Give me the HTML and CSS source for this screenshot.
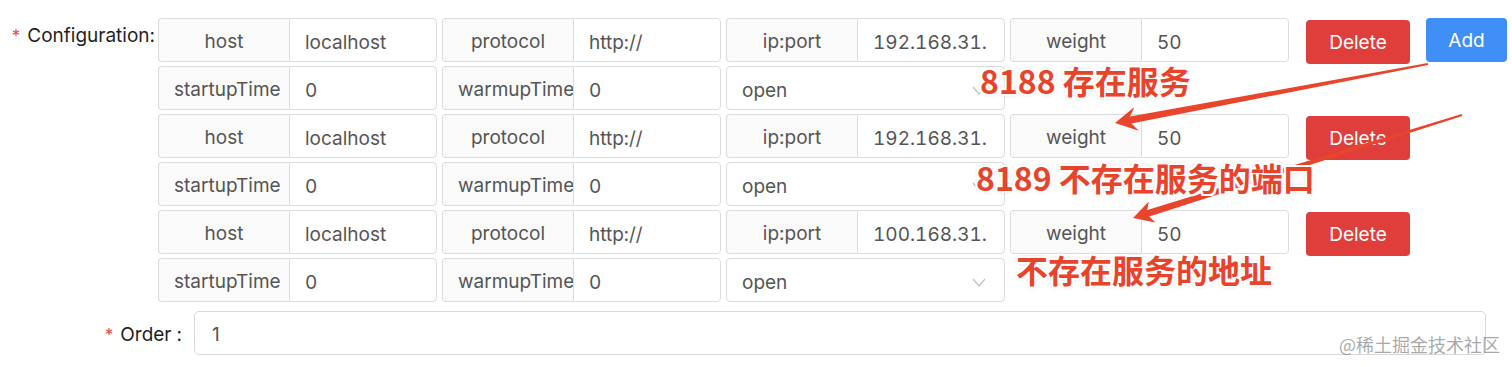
FILE: index.html
```html
<!DOCTYPE html>
<html lang="en">
<head>
  <meta charset="UTF-8">
  <meta name="viewport" content="width=device-width, initial-scale=1.0">
  <title>Configuration</title>
  <link rel="stylesheet" href="styles.css">
</head>
<body>
  <form class="form">
    <div class="form-item">
      <label class="item-label config-label"><span class="req">*</span>Configuration:</label>
      <div class="item-control">

        <div class="line">
          <div class="group"><span class="addon">host</span><input class="field" value="localhost" readonly></div>
          <div class="group"><span class="addon">protocol</span><input class="field" value="http://" readonly></div>
          <div class="group"><span class="addon">ip:port</span><input class="field" value="192.168.31." readonly></div>
          <div class="group"><span class="addon">weight</span><input class="field" value="50" readonly></div>
          <button type="button" class="btn btn-delete">Delete</button>
          <button type="button" class="btn btn-add">Add</button>
        </div>
        <div class="line">
          <div class="group"><span class="addon">startupTime</span><input class="field" value="0" readonly></div>
          <div class="group"><span class="addon">warmupTime</span><input class="field" value="0" readonly></div>
          <div class="select"><span>open</span><svg class="chevron" width="14" height="9" viewBox="0 0 14 9"><path d="M1 1 L7 8 L13 1" fill="none" stroke="#c2c2c2" stroke-width="1.2"/></svg></div>
        </div>

        <div class="line">
          <div class="group"><span class="addon">host</span><input class="field" value="localhost" readonly></div>
          <div class="group"><span class="addon">protocol</span><input class="field" value="http://" readonly></div>
          <div class="group"><span class="addon">ip:port</span><input class="field" value="192.168.31." readonly></div>
          <div class="group"><span class="addon">weight</span><input class="field" value="50" readonly></div>
          <button type="button" class="btn btn-delete">Delete</button>
        </div>
        <div class="line">
          <div class="group"><span class="addon">startupTime</span><input class="field" value="0" readonly></div>
          <div class="group"><span class="addon">warmupTime</span><input class="field" value="0" readonly></div>
          <div class="select"><span>open</span><svg class="chevron" width="14" height="9" viewBox="0 0 14 9"><path d="M1 1 L7 8 L13 1" fill="none" stroke="#c2c2c2" stroke-width="1.2"/></svg></div>
        </div>

        <div class="line">
          <div class="group"><span class="addon">host</span><input class="field" value="localhost" readonly></div>
          <div class="group"><span class="addon">protocol</span><input class="field" value="http://" readonly></div>
          <div class="group"><span class="addon">ip:port</span><input class="field" value="100.168.31." readonly></div>
          <div class="group"><span class="addon">weight</span><input class="field" value="50" readonly></div>
          <button type="button" class="btn btn-delete">Delete</button>
        </div>
        <div class="line">
          <div class="group"><span class="addon">startupTime</span><input class="field" value="0" readonly></div>
          <div class="group"><span class="addon">warmupTime</span><input class="field" value="0" readonly></div>
          <div class="select"><span>open</span><svg class="chevron" width="14" height="9" viewBox="0 0 14 9"><path d="M1 1 L7 8 L13 1" fill="none" stroke="#c2c2c2" stroke-width="1.2"/></svg></div>
        </div>

      </div>
    </div>

    <div class="form-item order-item">
      <label class="item-label order-label"><span class="req">*</span>Order<span class="colon">:</span></label>
      <input class="order-input" value="1" readonly>
    </div>
  </form>

  <!-- screenshot markup -->
  <svg class="arrows" width="1512" height="367" viewBox="0 0 1512 367">
    <polygon fill="#e8452c" points="1427.8,63 1130,116.6 1134.4,107.1 1115,123 1138.8,130.7 1131.4,123.4 1428.2,65"/>
    <polygon fill="#e8452c" points="1461.7,114 1147.2,209.9 1148.8,201.5 1133,218 1155.4,222.5 1149.3,216.5 1462.3,116"/>
  </svg>
  <div class="note note-1">8188 存在服务</div>
  <div class="note note-2">8189 不存在服务的端口</div>
  <div class="note note-3">不存在服务的地址</div>

  <div class="watermark">@稀土掘金技术社区</div>
</body>
</html>
```
FILE: styles.css
```css
body {
  margin: 0;
  position: relative;
  height: 367px;
  overflow: hidden;
  background: #ffffff;
  font-family: Inter, "Noto Sans", "Noto Sans CJK SC", sans-serif;
  font-size: 19px;
  color: #222222;
}

.form {
  padding-top: 18px;
}

.form-item {
  display: flex;
  align-items: flex-start;
}

.item-label {
  box-sizing: border-box;
  text-align: right;
  white-space: nowrap;
  color: #1f1f1f;
}

.req {
  color: #e5484d;
  font-size: 17px;
  margin-right: 7px;
}

.config-label {
  width: 158px;
  padding: 2px 3px 0 0;
  line-height: 32px;
}

.item-control {
  display: flex;
  flex-direction: column;
  gap: 4px;
}

.line {
  display: flex;
  gap: 5px;
  height: 44px;
  align-items: flex-start;
}

.group {
  display: flex;
  width: 279px;
  height: 44px;
}

.addon {
  box-sizing: border-box;
  width: 131px;
  flex: none;
  padding: 2px 15px 0;
  line-height: 42px;
  text-align: center;
  white-space: nowrap;
  overflow: hidden;
  color: #555555;
  background-color: #fafafa;
  border: 1px solid #dcdcdc;
  border-right: none;
  border-radius: 4px 0 0 4px;
}

.field {
  box-sizing: border-box;
  flex: 1;
  min-width: 0;
  height: 44px;
  margin: 0;
  padding: 4px 10px 0 15px;
  font: inherit;
  font-variant-numeric: tabular-nums;
  color: #555555;
  background: #ffffff;
  border: 1px solid #dcdcdc;
  border-radius: 0 4px 4px 0;
  outline: none;
}

.select {
  box-sizing: border-box;
  display: flex;
  align-items: center;
  justify-content: space-between;
  width: 279px;
  height: 44px;
  padding: 4px 18px 0 15px;
  color: #555555;
  border: 1px solid #dcdcdc;
  border-radius: 4px;
}

.btn {
  flex: none;
  height: 44px;
  padding-top: 2px;
  border: none;
  border-radius: 4px;
  font: inherit;
  color: #ffffff;
  cursor: pointer;
}

.btn-delete {
  width: 104px;
  margin: 2px 0 0 12px;
  background-color: #e03e3b;
}

.btn-add {
  width: 81px;
  margin-left: 11px;
  background-color: #3f8ff6;
}

.order-item {
  margin-top: 9px;
}

.order-label {
  width: 182px;
  margin-right: 12px;
  padding-top: 2px;
  line-height: 44px;
}

.colon {
  margin-left: 5px;
}

.order-input {
  box-sizing: border-box;
  width: 1292px;
  height: 44px;
  margin: 0;
  padding: 3px 17px 0;
  font: inherit;
  color: #555555;
  border: 1px solid #d9d9d9;
  border-radius: 5px;
  outline: none;
}

.arrows {
  position: absolute;
  left: 0;
  top: 0;
  pointer-events: none;
}

.note {
  position: absolute;
  font-family: "Noto Sans CJK SC", "Noto Sans", sans-serif;
  font-weight: 700;
  font-size: 32px;
  line-height: 36px;
  color: #e8432b;
  white-space: nowrap;
  text-shadow:
    -2px -2px 0 #fff, 2px -2px 0 #fff, -2px 2px 0 #fff, 2px 2px 0 #fff,
    0 -2px 0 #fff, 0 2px 0 #fff, -2px 0 0 #fff, 2px 0 0 #fff,
    0 0 4px rgba(0, 0, 0, 0.35);
}

.note-1 {
  left: 980px;
  top: 62px;
}

.note-2 {
  left: 976px;
  top: 159px;
}

.note-3 {
  left: 1016px;
  top: 251px;
}

.watermark {
  position: absolute;
  right: 12px;
  top: 331px;
  font-family: "Noto Sans CJK SC", sans-serif;
  font-size: 18px;
  color: rgba(110, 110, 110, 0.6);
}
```
